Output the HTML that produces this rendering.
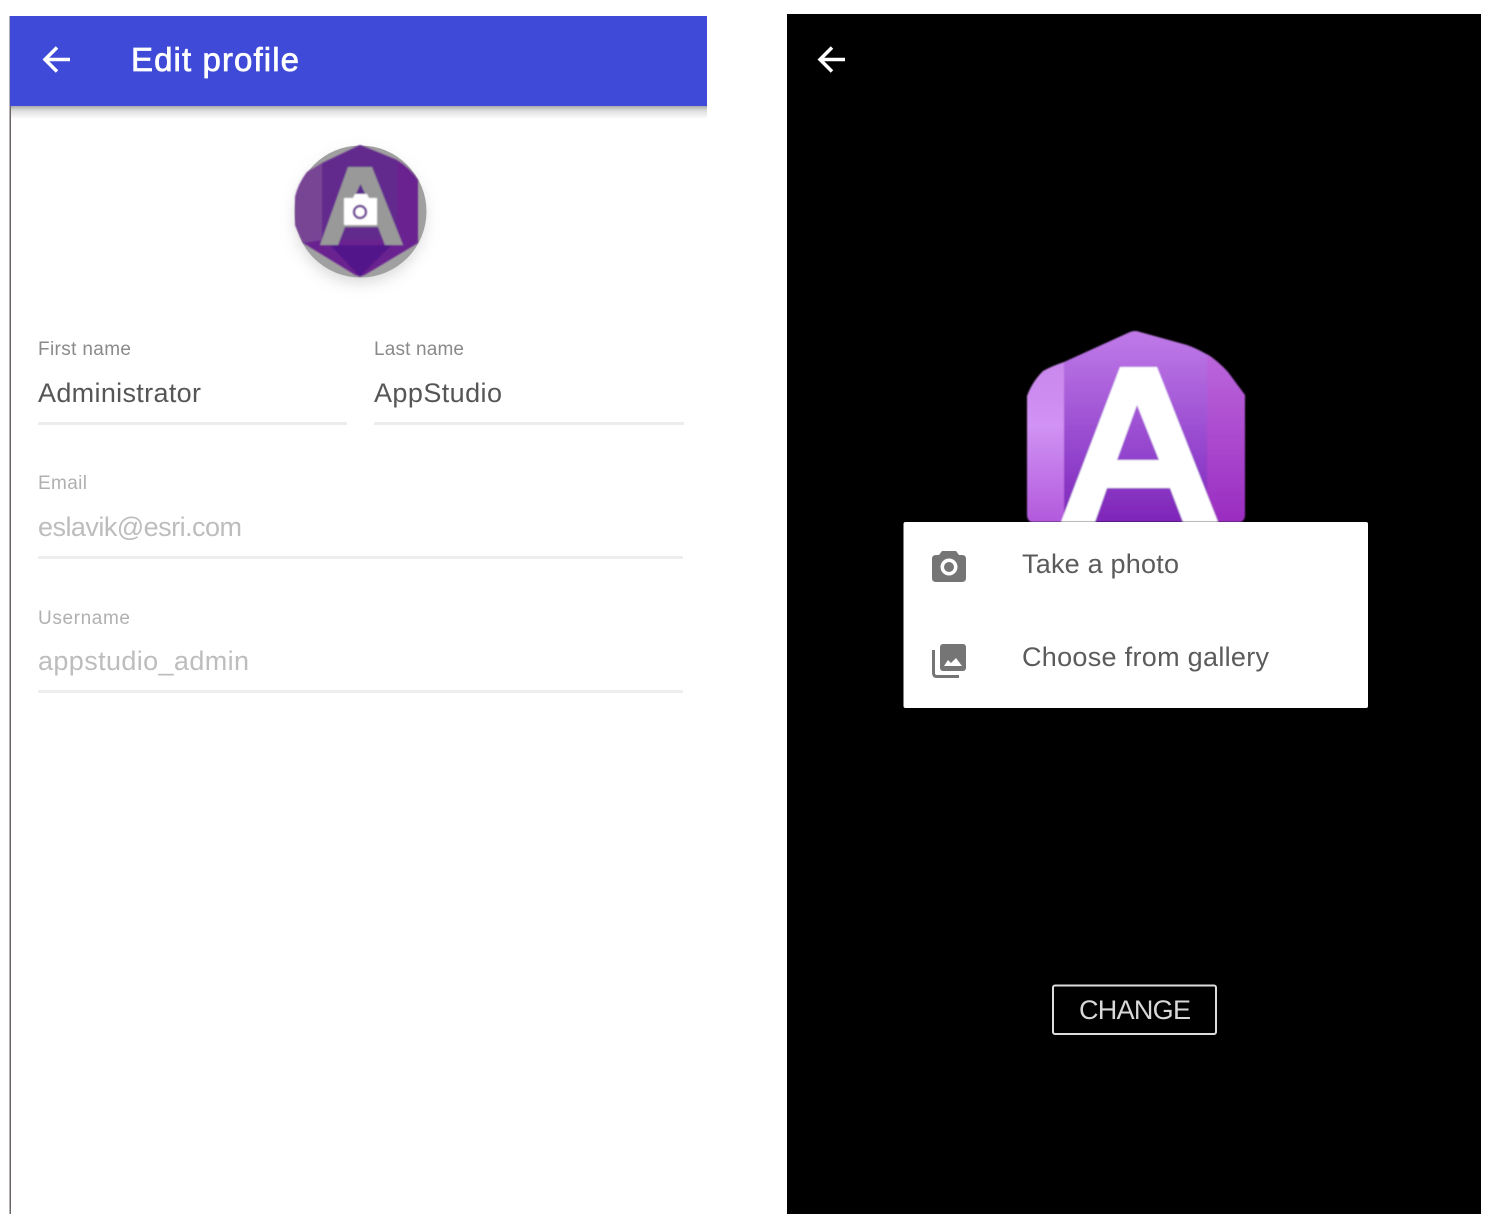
<!DOCTYPE html>
<html><head><meta charset="utf-8"><title>Edit profile</title>
<style>
html,body{margin:0;padding:0;background:#fff;width:1492px;height:1226px;overflow:hidden}
svg{display:block}
text{font-family:"Liberation Sans",sans-serif}
</style></head>
<body>
<svg width="1492" height="1226" viewBox="0 0 1492 1226" xmlns="http://www.w3.org/2000/svg">
<defs>
<linearGradient id="sh" x1="0" y1="0" x2="0" y2="1"><stop offset="0" stop-color="#aaa"/><stop offset="0.35" stop-color="#ddd"/><stop offset="1" stop-color="#fff"/></linearGradient>
<linearGradient id="p1" x1="0" y1="0" x2="0" y2="1"><stop offset="0" stop-color="#c07ae8"/><stop offset="0.7" stop-color="#8f3fca"/><stop offset="1" stop-color="#7f25b8"/></linearGradient>
<linearGradient id="p2" x1="0" y1="0" x2="0" y2="1"><stop offset="0" stop-color="#c987ec"/><stop offset="0.4" stop-color="#d092f4"/><stop offset="1" stop-color="#b259dc"/></linearGradient>
<linearGradient id="p3" x1="0" y1="0" x2="0" y2="1"><stop offset="0" stop-color="#bb66dc"/><stop offset="1" stop-color="#9a2cc0"/></linearGradient>
<filter id="b" x="-30%" y="-30%" width="160%" height="160%"><feGaussianBlur stdDeviation="8"/></filter>
<filter id="s" x="-10%" y="-10%" width="120%" height="120%"><feGaussianBlur stdDeviation="0.7"/></filter>
</defs>

<!-- Left phone -->
<rect x="9.500" y="16" width="1.500" height="1198" fill="#6a6468"/>
<rect x="11" y="106" width="696" height="13" fill="url(#sh)"/>
<rect x="10" y="16" width="697" height="90" fill="#3f4bd8"/>
<path d="M70 59.500H45.500M57 47.500L45 59.500L57 71.500" fill="none" stroke="#fff" stroke-width="3.500"/>
<text x="131" y="71" font-size="33" fill="#fff" textLength="168" stroke="#fff" stroke-width="0.7">Edit profile</text>

<!-- Avatar -->
<circle cx="360" cy="218" r="64" fill="#bbb" filter="url(#b)" opacity="0.6"/>
<circle cx="360.500" cy="211.500" r="66" fill="#a0a0a0"/>
<g filter="url(#s)">
<path d="M360 145L323 163L307 172Q298 184 295 197V225L303 243L352 273Q360 279 368 273L418 243V180Q410 168 397 160Z" fill="#6b2290"/>
<path d="M295 197Q298 184 307 172L322 163V240L303 243L295 225Z" fill="#784495"/>
<path d="M322 163L360 145L397 160V240H322Z" fill="#642a8e"/>
<path d="M330 245H392L360 277Z" fill="#52188a"/>
<path d="M348 167H372L403 245H385L378 227H345L338 245H320Z" fill="#999"/>
<path d="M360.500 184L367 198H354Z" fill="#5c2a8c"/>
<path d="M344 198H353L355 194H367L369 198H377V225H344Z" fill="#fff"/>
<circle cx="360" cy="212" r="6" fill="none" stroke="#6d3a96" stroke-width="2.500"/>
</g>

<!-- Fields -->
<text x="38" y="355" font-size="19" fill="#8a8a8a" textLength="93">First name</text>
<text x="38" y="402" font-size="27" fill="#565656" textLength="163">Administrator</text>
<rect x="38" y="422" width="309" height="3" fill="#ececec"/>
<text x="374" y="355" font-size="19" fill="#8a8a8a" textLength="90">Last name</text>
<text x="374" y="402" font-size="27" fill="#565656" textLength="128">AppStudio</text>
<rect x="374" y="422" width="310" height="3" fill="#ececec"/>
<text x="38" y="489" font-size="19" fill="#b0b0b0" textLength="49">Email</text>
<text x="38" y="536" font-size="27" fill="#bdbdbd" textLength="204">eslavik@esri.com</text>
<rect x="38" y="556" width="645" height="3" fill="#eeeeee"/>
<text x="38" y="624" font-size="19" fill="#b0b0b0" textLength="92">Username</text>
<text x="38" y="670" font-size="27" fill="#bdbdbd" textLength="211">appstudio_admin</text>
<rect x="38" y="690" width="645" height="3" fill="#eeeeee"/>

<!-- Right phone -->
<rect x="787" y="14" width="694" height="1200" fill="#000"/>
<path d="M845 59.500H820.500M832 47.500L820 59.500L832 71.500" fill="none" stroke="#fff" stroke-width="3.500"/>

<!-- Large logo -->
<g filter="url(#s)">
<path d="M1064 362L1130 332Q1135 330 1140 332L1187 345Q1198 349 1208 355V522H1064Z" fill="url(#p1)"/>
<path d="M1064 362V522H1031Q1027 520 1027 515V396Q1032 382 1043 371Q1052 366 1064 362Z" fill="url(#p2)"/>
<path d="M1207 354Q1218 361 1228 372L1245 395V515Q1245 520 1241 522H1207Z" fill="url(#p3)"/>
<path d="M1120 367H1157L1218 522H1183L1170 488H1107L1095 522H1061ZM1137 405L1117 460H1159Z" fill="#fff" fill-rule="evenodd"/>
</g>

<!-- Card -->
<rect x="903.500" y="522" width="464.500" height="186" rx="2" fill="#fff"/>
<path d="M939 555L942 551H956L959 555H962Q966 555 966 559V578Q966 582 962 582H936Q932 582 932 578V559Q932 555 936 555Z" fill="#757575"/>
<circle cx="949" cy="567" r="8.500" fill="#fff"/>
<circle cx="949" cy="567" r="5" fill="#757575"/>
<rect x="940" y="644" width="26" height="27" rx="3" fill="#757575"/>
<path d="M944 666H962L956 658L951 663L948 660Z" fill="#fff"/>
<path d="M933.500 650V673Q933.500 676.500 937 676.500H959" fill="none" stroke="#757575" stroke-width="3"/>
<text x="1022" y="573" font-size="27" fill="#5b5b5b" textLength="157">Take a photo</text>
<text x="1022" y="666" font-size="27" fill="#5b5b5b" textLength="247">Choose from gallery</text>

<!-- Button -->
<rect x="1053" y="985.500" width="163" height="48.500" rx="2" fill="none" stroke="#ddd" stroke-width="2"/>
<text x="1079" y="1019" font-size="27" fill="#d8d8d8" textLength="112">CHANGE</text>
</svg>
</body></html>
